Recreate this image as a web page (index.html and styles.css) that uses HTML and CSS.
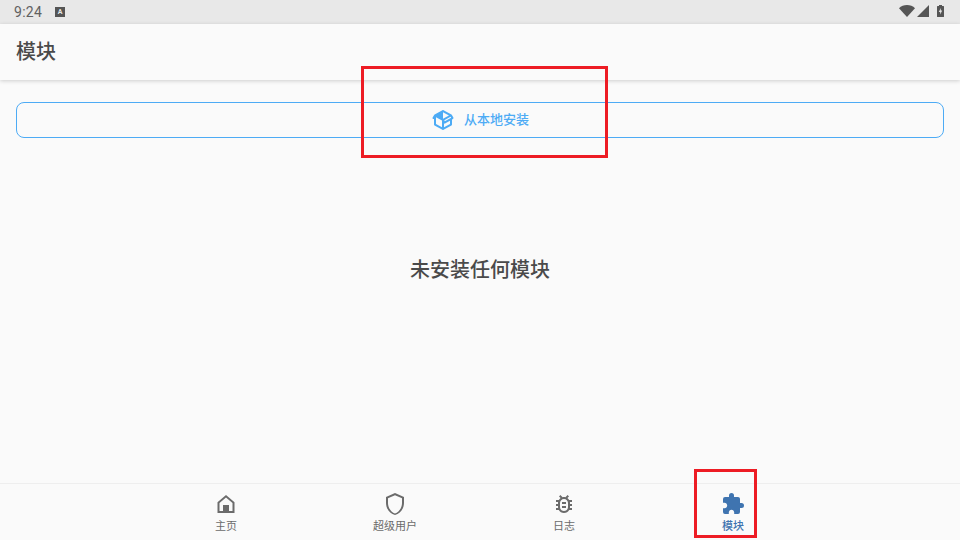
FILE: index.html
```html
<!DOCTYPE html>
<html lang="zh-CN">
<head>
  <meta charset="UTF-8" />
  <title>模块</title>
  <link rel="stylesheet" href="styles.css">
</head>
<body>

<div class="screen">
  <div class="status-bar">
    <span class="clock">9:24</span>
    <span class="notify-icon">A</span>
    <div class="status-icons">
      <svg class="wifi" viewBox="0 0 16 12"><path d="M0 3.200C2 1.200 5 0 8 0s6 1.200 8 3.200L8 12z"/></svg>
      <svg class="signal" viewBox="0 0 12 12"><path d="M12 0v12H0z"/></svg>
      <svg class="battery" viewBox="0 0 7 12"><path fill-rule="evenodd" d="M2 0h3v1h1.400c.3 0 .6.3.6.6v9.800c0 .3-.3.6-.6.6H.6c-.3 0-.6-.3-.6-.6V1.600C0 1.300.3 1 .6 1H2zM3.800 3 1.800 7h1.400v2.500L5.200 5.500H3.800z"/></svg>
    </div>
  </div>

  <header class="app-bar">
    <h1 class="app-title">模块</h1>
  </header>

  <main class="content">
    <button class="install-btn">
      <svg class="install-icon" viewBox="0 0 24 24"><path d="M2,10.96C1.500,10.680 1.350,10.070 1.630,9.590L3.130,7C3.240,6.800 3.410,6.660 3.600,6.580L11.430,2.180C11.590,2.060 11.790,2 12,2C12.210,2 12.410,2.060 12.570,2.180L20.470,6.620C20.660,6.720 20.820,6.880 20.910,7.080L22.360,9.600C22.640,10.080 22.470,10.690 22,10.960L21,11.540V16.500C21,16.880 20.790,17.210 20.470,17.380L12.570,21.820C12.410,21.940 12.210,22 12,22C11.790,22 11.590,21.940 11.430,21.820L3.530,17.380C3.210,17.210 3,16.880 3,16.500V10.960C2.700,11.130 2.320,11.140 2,10.960M12,4.150V4.150L12,10.850V10.850L17.960,7.500L12,4.150M5,15.910L11,19.290V12.580L5,9.210V15.910M19,15.910V12.690L14,15.590C13.670,15.770 13.300,15.760 13,15.600V19.290L19,15.910M13.850,13.360L20.130,9.730L19.550,8.720L13.270,12.350L13.850,13.360Z"/></svg>
      <span class="install-label">从本地安装</span>
    </button>
    <div class="empty-wrap">
      <p class="empty-text">未安装任何模块</p>
    </div>
  </main>

  <nav class="bottom-nav">
    <div class="nav-item">
      <svg class="nav-icon" viewBox="0 0 24 24"><path fill-rule="evenodd" d="M12 3 3.500 10.200V21h17V10.200zM12 5.600l6.500 5.500V19H15v-6H9v6H5.500v-7.900z"/></svg>
      <span>主页</span>
    </div>
    <div class="nav-item">
      <svg class="nav-icon" viewBox="0 0 24 24"><path d="M12,1L3,5V11C3,16.550 6.840,21.740 12,23C17.160,21.740 21,16.550 21,11V5L12,1M12,3.180L19,6.300V11.220C19,15.940 15.810,20.300 12,21.500C8.190,20.300 5,15.940 5,11.220V6.300L12,3.180Z"/></svg>
      <span>超级用户</span>
    </div>
    <div class="nav-item">
      <svg class="nav-icon" viewBox="0 0 24 24"><path d="M20 8h-2.810c-.45-.78-1.070-1.450-1.820-1.960L17 4.410 15.590 3l-2.170 2.170C12.960 5.060 12.490 5 12 5s-.96.06-1.410.17L8.410 3 7 4.410l1.620 1.630C7.880 6.550 7.260 7.220 6.810 8H4v2h2.090c-.05.33-.09.66-.09 1v1H4v2h2v1c0 .34.04.67.09 1H4v2h2.810c1.040 1.790 2.970 3 5.190 3s4.150-1.210 5.190-3H20v-2h-2.090c.05-.33.09-.66.09-1v-1h2v-2h-2v-1c0-.34-.04-.67-.09-1H20V8zm-4 7c0 2.210-1.790 4-4 4s-4-1.790-4-4v-4c0-2.210 1.790-4 4-4s4 1.790 4 4zm-6-1h4v2h-4zm0-4h4v2h-4z"/></svg>
      <span>日志</span>
    </div>
    <div class="nav-item active">
      <svg class="nav-icon" viewBox="0 0 24 24"><path d="M20.500,11H19V7C19,5.890 18.100,5 17,5H13V3.500A2.500,2.500 0 0,0 10.500,1A2.500,2.500 0 0,0 8,3.500V5H4A2,2 0 0,0 2,7V10.800H3.500C5,10.800 6.200,12 6.200,13.500C6.200,15 5,16.200 3.500,16.200H2V20A2,2 0 0,0 4,22H7.800V20.500C7.800,19 9,17.800 10.500,17.800C12,17.800 13.200,19 13.200,20.500V22H17A2,2 0 0,0 19,20V16H20.500A2.500,2.500 0 0,0 23,13.500A2.500,2.500 0 0,0 20.500,11Z"/></svg>
      <span>模块</span>
    </div>
  </nav>

  <!-- red annotation boxes -->
  <div class="mark mark-install"></div>
  <div class="mark mark-nav"></div>
  <div class="corner"></div>
</div>

</body>
</html>
```

FILE: styles.css
```css
:root {
  --bg-base: #fafafa;
  --bg-status: #e8e8e8;
  --text-base: #4a4a4a;
  --text-nav: #6b6b6b;
  --accent: #4dabf5;
  --nav-active: #3f74b0;
  --mark: #ed1c24;
}
* {
  box-sizing: border-box;
  margin: 0;
  padding: 0;
}

body {
  font-family: Roboto, "Noto Sans CJK SC", sans-serif;
  background: var(--bg-base);
  color: var(--text-base);
}

.screen {
  position: relative;
  width: 960px;
  height: 540px;
  overflow: hidden;
  display: flex;
  flex-direction: column;
}

/* --- status bar --- */
.status-bar {
  height: 24px;
  flex: none;
  background: var(--bg-status);
  display: flex;
  align-items: center;
  padding: 0 16px 0 14px;
  color: #616161;
}
.clock {
  font-size: 14px;
  letter-spacing: 0.3px;
  width: 41px;
}
.notify-icon {
  width: 10px;
  height: 10px;
  background: #555555;
  color: #e8e8e8;
  font-size: 7px;
  font-weight: 700;
  line-height: 10px;
  text-align: center;
}
.status-icons {
  margin-left: auto;
  margin-bottom: 2px;
  display: flex;
  align-items: center;
  gap: 2px;
}
.status-icons svg {
  fill: #555555;
  display: block;
}
.wifi { width: 16px; height: 12px; }
.signal { width: 12px; height: 12px; }
.battery { width: 7px; height: 12px; margin-left: 6px; }

/* --- app bar --- */
.app-bar {
  height: 56px;
  flex: none;
  display: flex;
  align-items: center;
  padding: 0 16px 4px;
  background: var(--bg-base);
  box-shadow: 0 1px 4px rgba(0,0,0,0.18);
  position: relative;
}
.app-title {
  font-size: 20px;
  font-weight: 500;
  color: var(--text-base);
}

/* --- content --- */
.content {
  flex: 1;
  padding: 22px 16px 0;
  display: flex;
  flex-direction: column;
}
.install-btn {
  height: 36px;
  flex: none;
  border: 1px solid var(--accent);
  border-radius: 8px;
  background: transparent;
  color: var(--accent);
  font-family: inherit;
  font-size: 13px;
  font-weight: 500;
  display: flex;
  align-items: center;
  justify-content: center;
  gap: 9px;
}
.install-label {
  padding-bottom: 3px;
}
.install-icon {
  width: 24px;
  height: 24px;
  fill: var(--accent);
}
.empty-wrap {
  flex: 1;
  display: flex;
  align-items: center;
  justify-content: center;
  padding-bottom: 84px;
}
.empty-text {
  font-size: 20px;
  font-weight: 500;
}

/* --- bottom nav --- */
.bottom-nav {
  height: 57px;
  flex: none;
  border-top: 1px solid #eeeeee;
  display: grid;
  grid-template-columns: repeat(4, 169px);
  justify-content: center;
  padding-right: 1px;
  background: var(--bg-base);
}
.nav-item {
  display: flex;
  flex-direction: column;
  align-items: center;
  padding-top: 8px;
  color: var(--text-nav);
  font-size: 11px;
  line-height: 16px;
}
.nav-item span {
  margin-top: 3px;
}
.nav-icon {
  width: 24px;
  height: 24px;
  fill: var(--text-nav);
  display: block;
}
.nav-item.active {
  color: var(--nav-active);
  font-weight: 500;
}
.nav-item.active .nav-icon {
  fill: var(--nav-active);
}

/* --- overlays --- */
.mark {
  position: absolute;
  border: 3px solid var(--mark);
}
.mark-install {
  left: 361px;
  top: 66px;
  width: 247px;
  height: 92px;
}
.mark-nav {
  left: 694px;
  top: 469px;
  width: 63px;
  height: 69px;
}
.corner {
  position: absolute;
  left: -6px;
  top: 534px;
  width: 12px;
  height: 12px;
  border: 1px solid #333333;
  border-radius: 50%;
  clip-path: inset(0 50% 50% 0);
}
```
